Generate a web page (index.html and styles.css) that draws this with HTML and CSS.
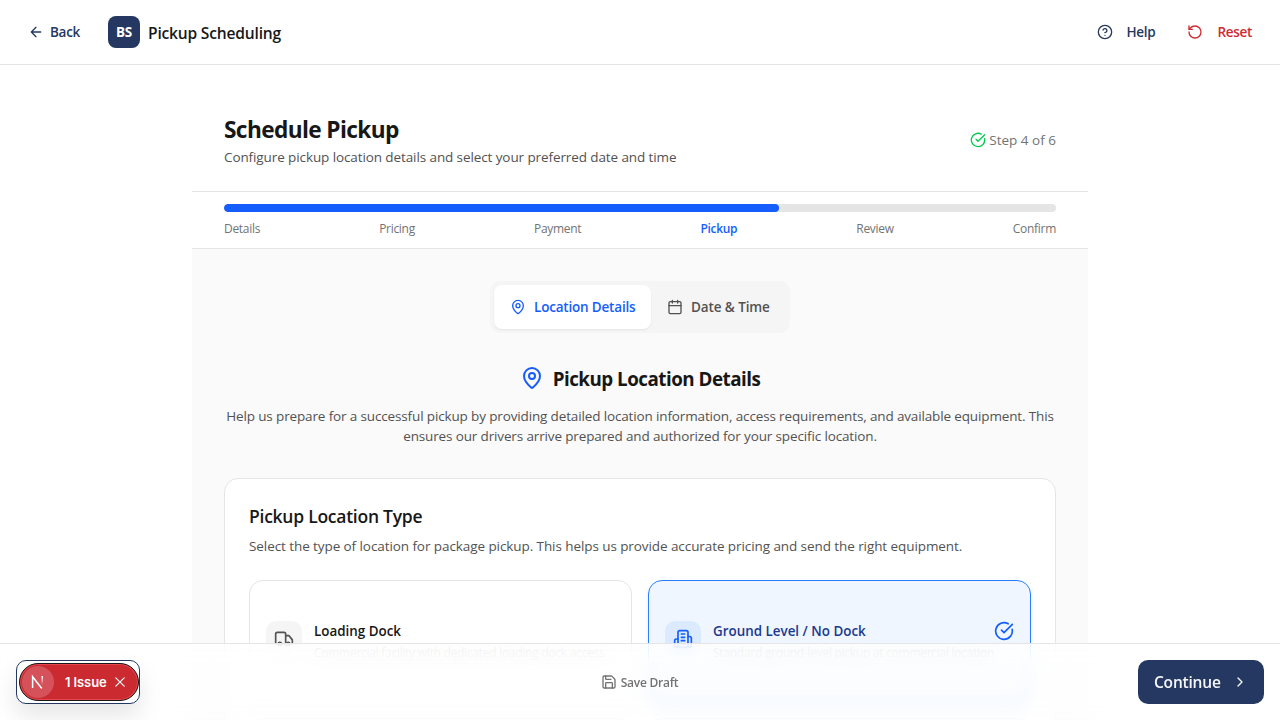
FILE: index.html
```html
<!DOCTYPE html>
<html lang="en">
<head>
<meta charset="utf-8">
<title>Pickup Scheduling</title>
<link rel="stylesheet" href="styles.css">
</head>
<body>
<svg class="defs" aria-hidden="true">
<symbol id="pin" viewBox="0 0 24 24"><path d="M20 10c0 4.993-5.539 10.193-7.399 11.799a1 1 0 0 1-1.202 0C9.539 20.193 4 14.993 4 10a8 8 0 0 1 16 0"/><circle cx="12" cy="10" r="3"/></symbol>
<symbol id="check" viewBox="0 0 24 24"><path d="M21.801 10A10 10 0 1 1 17 3.335"/><path d="m9 11 3 3L22 4"/></symbol>
</svg>
<header class="topbar">
  <div class="group">
    <a class="back"><svg class="icon s16" viewBox="0 0 24 24"><path d="m12 19-7-7 7-7M19 12H5"/></svg><span>Back</span></a>
    <div class="brand"><span class="logo">BS</span><span class="brand-name">Pickup Scheduling</span></div>
  </div>
  <div class="actions">
    <a class="help"><svg class="icon s16" viewBox="0 0 24 24"><circle cx="12" cy="12" r="10"/><path d="M9.09 9a3 3 0 0 1 5.83 1c0 2-3 3-3 3M12 17h.01"/></svg><span>Help</span></a>
    <a class="reset"><svg class="icon s16" viewBox="0 0 24 24"><path d="M3 12a9 9 0 1 0 9-9 9.75 9.75 0 0 0-6.74 2.74L3 8"/><path d="M3 3v5h5"/></svg><span>Reset</span></a>
  </div>
</header>
<main class="page">
  <section class="heading">
    <div><h1>Schedule Pickup</h1><p class="sub">Configure pickup location details and select your preferred date and time</p></div>
    <div class="step"><svg class="icon s16 green"><use href="#check"/></svg><span>Step 4 of 6</span></div>
  </section>
  <section class="progress">
    <div class="track"><div class="fill"></div></div>
    <div class="labels"><span>Details</span><span>Pricing</span><span>Payment</span><span class="current">Pickup</span><span>Review</span><span>Confirm</span></div>
  </section>
  <section class="content">
    <div class="tabs">
      <div class="tab active"><svg class="icon s16"><use href="#pin"/></svg><span>Location Details</span></div>
      <div class="tab"><svg class="icon s16" viewBox="0 0 24 24"><path d="M8 2v4M16 2v4"/><rect x="3" y="4" width="18" height="18" rx="2"/><path d="M3 10h18"/></svg><span>Date &amp; Time</span></div>
    </div>
    <h2><svg class="icon s24"><use href="#pin"/></svg><span>Pickup Location Details</span></h2>
    <p class="intro"><span>Help us prepare for a successful pickup by providing detailed location information, access requirements, and available equipment. This</span><br><span>ensures our drivers arrive prepared and authorized for your specific location.</span></p>
    <div class="card">
      <h3>Pickup Location Type</h3>
      <p class="card-sub">Select the type of location for package pickup. This helps us provide accurate pricing and send the right equipment.</p>
      <div class="options">
        <div class="option">
          <div class="tile"><svg class="icon s20" viewBox="0 0 24 24"><path d="M14 18V6a2 2 0 0 0-2-2H4a2 2 0 0 0-2 2v11a1 1 0 0 0 1 1h2M15 18H9M19 18h2a1 1 0 0 0 1-1v-3.65a1 1 0 0 0-.22-.624l-3.48-4.35A1 1 0 0 0 17.52 8H14"/><circle cx="17" cy="18" r="2"/><circle cx="7" cy="18" r="2"/></svg></div>
          <div class="option-text"><h4>Loading Dock</h4><p><span>Commercial facility with dedicated loading dock access</span></p></div>
        </div>
        <div class="option selected">
          <div class="tile"><svg class="icon s20" viewBox="0 0 24 24"><path d="M6 22V4a2 2 0 0 1 2-2h8a2 2 0 0 1 2 2v18Z"/><path d="M6 12H4a2 2 0 0 0-2 2v6a2 2 0 0 0 2 2h2M18 9h2a2 2 0 0 1 2 2v9a2 2 0 0 1-2 2h-2M10 6h4M10 10h4M10 14h4M10 18h4"/></svg></div>
          <div class="option-text"><h4>Ground Level / No Dock</h4><p><span>Standard ground-level pickup at commercial location</span></p></div>
          <svg class="icon s20 mark"><use href="#check"/></svg>
        </div>
        <div class="option"></div>
        <div class="option"></div>
      </div>
    </div>
  </section>
</main>
<footer class="bottom">
  <div class="issue-focus"><div class="issue"><span class="next"><svg viewBox="0 0 20 20"><defs><linearGradient id="fade" x1="0" y1="0" x2="0" y2="1"><stop offset="0" stop-color="#fff"/><stop offset="1" stop-color="#fff" stop-opacity="0"/></linearGradient></defs><path d="M4.6 16V4.7L13.8 16.5" fill="none" stroke="#fff" stroke-width="1.5"/><path d="M13.5 4h1.5v9h-1.5z" fill="url(#fade)"/></svg></span><b>1 Issue</b><svg class="close" viewBox="0 0 14 14"><path d="m2.8 2.8 8.400 8.400M11.200 2.800l-8.400 8.400"/></svg></div></div>
  <div class="save"><svg class="icon s16" viewBox="0 0 24 24"><path d="M15.2 3a2 2 0 0 1 1.4.6l3.8 3.8a2 2 0 0 1 .6 1.4V19a2 2 0 0 1-2 2H5a2 2 0 0 1-2-2V5a2 2 0 0 1 2-2z"/><path d="M17 21v-7a1 1 0 0 0-1-1H8a1 1 0 0 0-1 1v7M7 3v4a1 1 0 0 0 1 1h7"/></svg><span>Save Draft</span></div>
  <button class="continue"><span>Continue</span><svg class="icon s16" viewBox="0 0 24 24"><path d="m9 18 6-6-6-6"/></svg></button>
</footer>
</body>
</html>
```
FILE: styles.css
```css
* { box-sizing: border-box; margin: 0; padding: 0; }
body { width: 1280px; height: 720px; overflow: hidden; background: #fff; color: #171717; font-family: "Open Sans", "Noto Sans", sans-serif; font-size: 13.5px; line-height: 20px; }
span, b { white-space: nowrap; }
.defs { position: absolute; width: 0; height: 0; }
.icon { fill: none; stroke: currentColor; stroke-width: 2; stroke-linecap: round; stroke-linejoin: round; flex: none; display: block; }
.s16 { width: 16px; height: 16px; }
.s20 { width: 20px; height: 20px; }
.s24 { width: 24px; height: 24px; }
.topbar { height: 65px; border-bottom: 1px solid #e5e5e5; padding: 0 28px; display: flex; align-items: center; justify-content: space-between; }
.group, .back, .brand, .actions, .help, .reset { display: flex; align-items: center; }
.group { gap: 28px; }
.back { width: 52px; gap: 6px; color: #253861; font-weight: 600; letter-spacing: -.3px; }
.brand { gap: 8px; }
.logo { width: 32px; height: 32px; border-radius: 8px; background: #253861; color: #fff; font-weight: 700; letter-spacing: -.2px; line-height: 32px; text-align: center; }
.brand-name { font-size: 15.6px; font-weight: 600; letter-spacing: -.2px; padding-top: 1px; }
.actions { gap: 32px; font-weight: 600; letter-spacing: -.3px; color: #253861; }
.help, .reset { gap: 14px; }
.reset { color: #cf2a33; }
.page { width: 896px; height: 655px; overflow: hidden; margin: 0 auto; }
.heading { height: 127px; border-bottom: 1px solid #e5e5e5; padding: 49px 32px 0; display: flex; justify-content: space-between; }
h1 { font-size: 22.7px; line-height: 32px; font-weight: 700; letter-spacing: -.63px; }
.sub { color: #525252; margin-top: 1px; letter-spacing: -.1px; }
.step { display: flex; gap: 3px; height: 20px; margin-top: 16px; color: #737373; align-items: center; }
.green { color: #00c950; }
.progress { height: 57px; padding: 12px 32px; border-bottom: 1px solid #e5e5e5; }
.track { height: 8px; border-radius: 4px; background: #e5e5e5; overflow: hidden; }
.fill { width: 66.7%; height: 8px; border-radius: 4px; background: #155dfc; }
.labels { display: flex; justify-content: space-between; margin-top: 9px; font-size: 12px; letter-spacing: -.3px; line-height: 16px; color: #737373; }
.labels .current { color: #155dfc; font-weight: 600; }
.content { background: #fafafa; height: 471px; padding: 32px; }
.tabs { width: 300px; height: 52px; margin: 0 auto; padding: 4px; background: #f5f5f5; border-radius: 10px; display: flex; }
.tab { display: flex; align-items: center; gap: 8px; padding: 0 16px; height: 44px; border-radius: 8px; font-weight: 600; color: #525252; letter-spacing: -.1px; }
.tab.active { width: 157px; flex: none; background: #fff; color: #155dfc; box-shadow: 0 1px 2px rgba(0,0,0,.07); letter-spacing: -.19px; }
h2 { display: flex; justify-content: center; align-items: center; gap: 9px; margin-top: 31px; height: 28px; font-size: 18.8px; line-height: 28px; font-weight: 700; letter-spacing: -.5px; }
h2 .icon { color: #155dfc; }
h2 span { padding-top: 1px; }
.intro { margin-top: 14px; text-align: center; color: #525252; letter-spacing: -.14px; }
.card { height: 500px; margin-top: 32px; padding: 23px 24px; background: #fff; border: 1px solid #e5e5e5; border-radius: 14px; }
h3 { font-size: 17.5px; line-height: 28px; font-weight: 600; letter-spacing: -.25px; }
.card-sub { margin-top: 6px; color: #525252; letter-spacing: -.08px; }
.options { display: grid; grid-template-columns: repeat(2, minmax(0, 1fr)); gap: 12px 16px; margin-top: 24px; }
.option { height: 126px; border: 1px solid #e5e5e5; border-radius: 14px; padding: 40px 16px 0; display: flex; gap: 12px; }
.selected { background: #eff6ff; border-color: #2b7fff; box-shadow: 0 2px 5px rgba(43,127,255,.12); }
.tile { width: 36px; height: 36px; border-radius: 10px; background: #f5f5f5; display: grid; place-items: center; color: #525252; flex: none; }
.selected .tile { background: #dbeafe; color: #155dfc; }
.option-text { flex: 1; min-width: 0; }
h4 { font-size: 13.4px; line-height: 20px; font-weight: 600; }
.selected h4 { color: #1c398e; }
.option p { margin-top: 4px; font-size: 12px; letter-spacing: -.27px; line-height: 16px; color: #737373; }
.mark { color: #155dfc; }
.bottom { position: fixed; left: 0; right: 0; bottom: 0; height: 77px; border-top: 1px solid #e5e5e5; padding: 0 16px; display: grid; grid-template-columns: 1fr auto 1fr; align-items: center; background: linear-gradient(to bottom, rgba(255,255,255,.87), rgba(255,255,255,.75) 50%, rgba(255,255,255,.65)); }
.bottom::before { content: ""; position: absolute; inset: 0; z-index: -1; backdrop-filter: blur(8px); mask-image: linear-gradient(to bottom, rgba(0,0,0,.5), #000 20px); }
.issue-focus { width: 124px; height: 44px; border: 1px solid #253861; border-radius: 10px; padding: 2px 0 2px 2px; background: #fff; box-shadow: 0 12px 24px rgba(0,0,0,.1); }
.issue { height: 38px; border: 1px solid #171717; border-radius: 19px; background: #ca2a30; box-shadow: inset 0 0 0 1px #e5484d; color: #fff; display: flex; align-items: center; padding-left: 2px; font: 13px "Inter", sans-serif; }
.next { width: 32px; height: 32px; border-radius: 50%; background: #d5525a; display: grid; place-items: center; margin-right: 11px; }
.next svg { width: 20px; height: 20px; }
.issue b { font-weight: 600; letter-spacing: -.1px; }
.close { width: 14px; height: 14px; margin-left: 6px; fill: none; stroke: #fff; stroke-width: 1.2; stroke-linecap: round; }
.save { display: flex; align-items: center; gap: 4px; font-size: 12px; letter-spacing: -.25px; font-weight: 600; color: #737373; margin-right: 1px; }
.save span { padding-top: 1px; }
.continue { justify-self: end; width: 126px; height: 44px; border: 0; border-radius: 10px; background: #253861; color: #f5f7fb; display: flex; align-items: center; justify-content: space-between; padding: 0 16px; font: 600 15.5px "Open Sans", sans-serif; letter-spacing: -.2px; }
```
